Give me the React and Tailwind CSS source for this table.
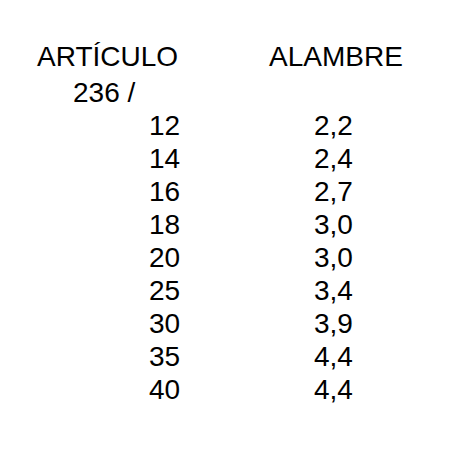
import React from 'react';

const rows = [
  ['12', '2,2'],
  ['14', '2,4'],
  ['16', '2,7'],
  ['18', '3,0'],
  ['20', '3,0'],
  ['25', '3,4'],
  ['30', '3,9'],
  ['35', '4,4'],
  ['40', '4,4'],
];

export default function App() {
  return (
    <div className="w-[458px] h-[458px] bg-white text-black font-['Liberation_Sans',Arial,sans-serif] text-[28px] leading-[33px] pt-[40px] pl-[37px]">
      {/* header */}
      <div className="flex h-[36px]">
        <div className="w-[232px]">ARTÍCULO</div>
        <div>ALAMBRE</div>
      </div>

      <div className="pl-[36px]">236 /</div>

      {rows.map(([art, alambre]) => (
        <div key={art} className="flex">
          <div className="w-[232px] pl-[112px]">{art}</div>
          <div className="pl-[45px]">{alambre}</div>
        </div>
      ))}
    </div>
  );
}
